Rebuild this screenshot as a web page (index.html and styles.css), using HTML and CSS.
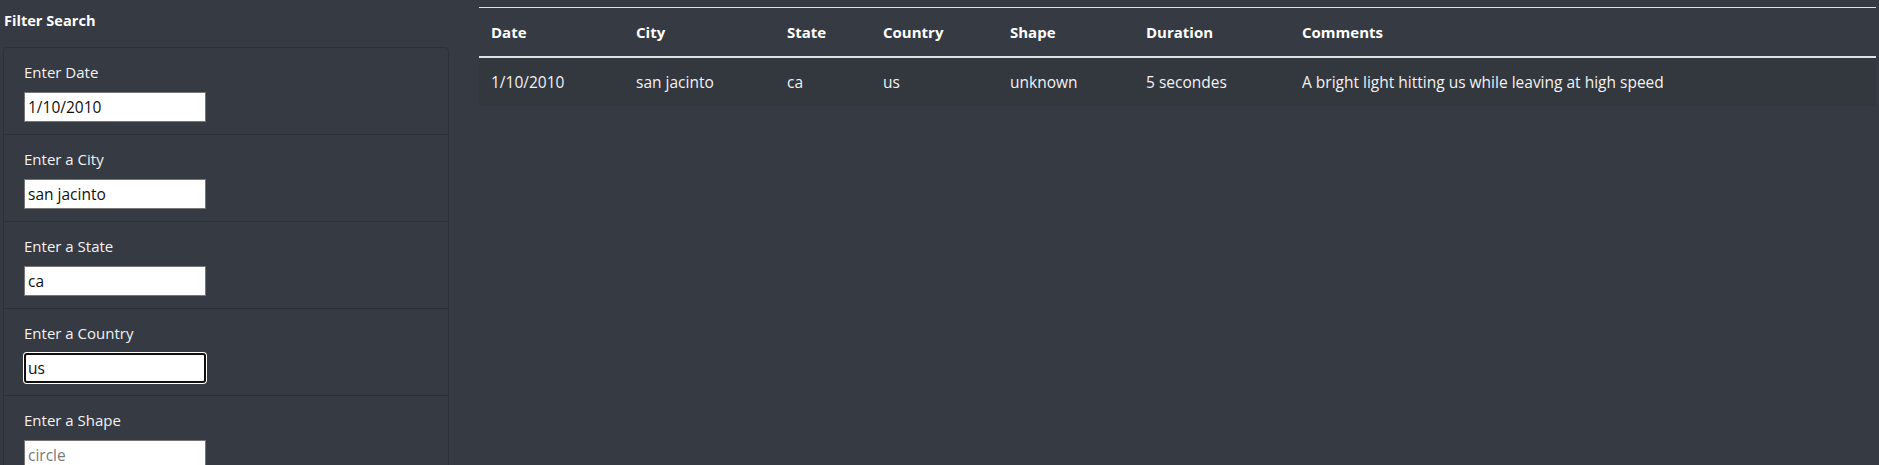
FILE: index.html
```html
<!DOCTYPE html>
<html lang="en">
<head>
<meta charset="utf-8">
<title>UFO Sightings</title>
<link rel="stylesheet" href="styles.css">
</head>
<body>
<div class="page">
  <aside class="sidebar">
    <h6 class="title">Filter Search</h6>
    <ul class="filters">
      <li class="filter">
        <label class="filter-label" for="date">Enter Date</label>
        <input class="filter-input" id="date" type="text" value="1/10/2010">
      </li>
      <li class="filter">
        <label class="filter-label" for="city">Enter a City</label>
        <input class="filter-input" id="city" type="text" value="san jacinto">
      </li>
      <li class="filter">
        <label class="filter-label" for="state">Enter a State</label>
        <input class="filter-input" id="state" type="text" value="ca">
      </li>
      <li class="filter">
        <label class="filter-label" for="country">Enter a Country</label>
        <input class="filter-input is-focused" id="country" type="text" value="us">
      </li>
      <li class="filter">
        <label class="filter-label" for="shape">Enter a Shape</label>
        <input class="filter-input" id="shape" type="text" placeholder="circle">
      </li>
    </ul>
  </aside>
  <main class="content">
    <table class="results">
      <colgroup>
        <col class="c-date"><col class="c-city"><col class="c-state"><col class="c-country"><col class="c-shape"><col class="c-duration"><col>
      </colgroup>
      <thead>
        <tr>
          <th>Date</th><th>City</th><th>State</th><th>Country</th><th>Shape</th><th>Duration</th><th>Comments</th>
        </tr>
      </thead>
      <tbody>
        <tr>
          <td>1/10/2010</td><td>san jacinto</td><td>ca</td><td>us</td><td>unknown</td><td>5 secondes</td><td>A bright light hitting us while leaving at high speed</td>
        </tr>
      </tbody>
    </table>
  </main>
</div>
</body>
</html>
```

FILE: styles.css
```css
html, body {
  margin: 0;
  padding: 0;
  height: 100%;
  overflow: hidden;
}

body {
  background: #363a42;
  color: #f4f4f4;
  font-family: "Open Sans", "Noto Sans", sans-serif;
  font-size: 15px;
  line-height: 24px;
}

.page {
  display: flex;
  align-items: flex-start;
  gap: 30px;
  padding-left: 3px;
}

.sidebar {
  width: 446px;
  flex: none;
}

.title {
  margin: 8px 0 15px 1px;
  font-size: 14.6px;
  font-weight: 700;
  line-height: 24px;
  color: #ffffff;
}

.filters {
  list-style: none;
  margin: 0;
  padding: 0;
  border: 1px solid #2d3137;
  border-radius: 4px;
}

.filter {
  display: flex;
  flex-direction: column;
  align-items: flex-start;
  gap: 8px;
  padding: 12px 20px;
  border-top: 1px solid #2d3137;
}

.filter:first-child {
  border-top: 0;
}

.filter-label {
  display: block;
  color: #f2f2f2;
  line-height: 24px;
}

.filter-input {
  box-sizing: border-box;
  width: 182px;
  height: 30px;
  margin: 0;
  padding: 0 3px;
  border: 1px solid #767676;
  border-radius: 0;
  background: #ffffff;
  color: #111111;
  font-family: inherit;
  font-size: 15.5px;
  line-height: 24px;
  outline: none;
}

.filter-input::placeholder {
  color: #7a7a7a;
}

.filter-input.is-focused {
  border: 2px solid #101010;
  border-radius: 3px;
  padding: 0 2px;
  box-shadow: 0 0 0 1px #ffffff;
}

.content {
  flex: 1;
  padding-top: 7px;
  padding-right: 3px;
}

.results {
  width: 100%;
  border-collapse: collapse;
  table-layout: fixed;
}

.c-date { width: 145px; }
.c-city { width: 151px; }
.c-state { width: 96px; }
.c-country { width: 127px; }
.c-shape { width: 136px; }
.c-duration { width: 156px; }

.results th {
  padding: 12px;
  text-align: left;
  font-weight: 700;
  color: #ffffff;
  border-top: 1px solid #dee2e6;
  border-bottom: 2px solid #dee2e6;
}

.results td {
  padding: 12px;
  font-size: 15.5px;
  color: #f2f2f2;
  background: #33373e;
  white-space: nowrap;
}
```
